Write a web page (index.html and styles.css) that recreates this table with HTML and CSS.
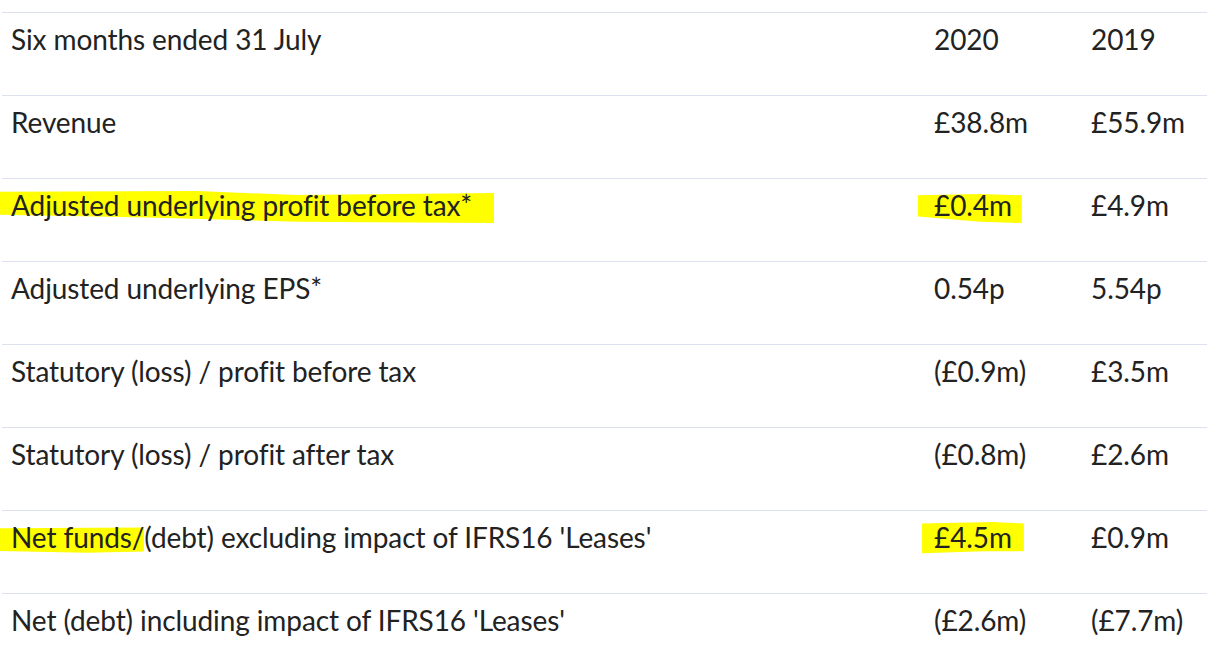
FILE: index.html
```html
<!DOCTYPE html>
<html>
<head>
<meta charset="utf-8">
<link rel="stylesheet" href="styles.css">
</head>
<body>
<div class="wrap">
<table class="results">
<tr><td class="label">Six months ended 31 July</td><td class="v1">2020</td><td class="v2">2019</td></tr>
<tr><td class="label">Revenue</td><td class="v1">£38.8m</td><td class="v2">£55.9m</td></tr>
<tr><td class="label"><span class="hl hl-a">Adjusted underlying profit before tax*</span></td><td class="v1"><span class="hl hl-b">£0.4m</span></td><td class="v2">£4.9m</td></tr>
<tr><td class="label">Adjusted underlying EPS*</td><td class="v1">0.54p</td><td class="v2">5.54p</td></tr>
<tr><td class="label">Statutory (loss) / profit before tax</td><td class="v1">(£0.9m)</td><td class="v2">£3.5m</td></tr>
<tr><td class="label">Statutory (loss) / profit after tax</td><td class="v1">(£0.8m)</td><td class="v2">£2.6m</td></tr>
<tr><td class="label"><span class="hl hl-c">Net funds/</span>(debt) excluding impact of IFRS16 'Leases'</td><td class="v1"><span class="hl hl-d">£4.5m</span></td><td class="v2">£0.9m</td></tr>
<tr><td class="label">Net (debt) including impact of IFRS16 'Leases'</td><td class="v1">(£2.6m)</td><td class="v2">(£7.7m)</td></tr>
</table>
</div>
</body>
</html>
```
FILE: styles.css
```css
html, body { margin: 0; padding: 0; background: #fff; }
.wrap { padding: 12px 0 0 2px; }
.results {
  border-collapse: collapse;
  width: 1205px;
  font-family: "Lato", "Noto Sans", sans-serif;
  font-size: 28px;
  letter-spacing: -0.1px;
  color: #222;
}
.results td {
  border-top: 1px solid #dde0ee;
  height: 72px;
  vertical-align: top;
  padding: 10px 0 0 0;
  line-height: 32px;
  white-space: nowrap;
}
.label { padding-left: 9px !important; }
.v1 { width: 157px; }
.v2 { width: 116px; }
.hl { position: relative; z-index: 0; }
.hl::before {
  content: "";
  position: absolute;
  z-index: -1;
  background: #ffff00;
  top: 0; bottom: 0; left: 0; right: 0;
}
.hl-a::before {
  left: -11px; right: -22px; top: 1px; bottom: -1px;
  clip-path: polygon(0 8%, 40% 6%, 60% 18%, 100% 12%, 100% 100%, 60% 96%, 30% 84%, 0 76%);
}
.hl-b::before {
  left: -16px; right: -10px; top: 2px; bottom: -1px;
  clip-path: polygon(0 16%, 60% 12%, 100% 16%, 100% 100%, 60% 96%, 0 80%);
}
.hl-c::before {
  left: -11px; right: 0; top: 4px; bottom: 0;
  clip-path: polygon(0 14%, 100% 12%, 100% 92%, 60% 96%, 0 90%);
}
.hl-d::before {
  left: -12px; right: -12px; top: 0; bottom: 0;
  clip-path: polygon(0 10%, 70% 6%, 100% 10%, 100% 92%, 60% 92%, 0 98%);
}
```
